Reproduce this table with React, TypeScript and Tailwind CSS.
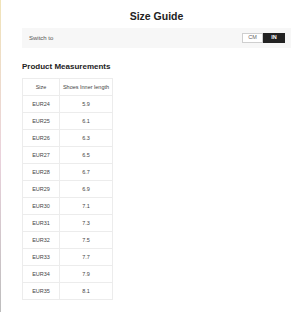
import React from "react";

const rows: [string, string][] = [
  ["EUR24", "5.9"],
  ["EUR25", "6.1"],
  ["EUR26", "6.3"],
  ["EUR27", "6.5"],
  ["EUR28", "6.7"],
  ["EUR29", "6.9"],
  ["EUR30", "7.1"],
  ["EUR31", "7.3"],
  ["EUR32", "7.5"],
  ["EUR33", "7.7"],
  ["EUR34", "7.9"],
  ["EUR35", "8.1"],
];

export default function App() {
  return (
    <div className="flex w-[300px] h-[312px] bg-white overflow-hidden font-['Liberation_Sans',Arial,sans-serif]">
      <div className="w-px shrink-0 bg-gradient-to-b from-[#f1e4b8] via-[#ead2dc] to-[#bdbdbd]" />
      <div className="flex-1 flex flex-col pl-[21px] pr-[9px]">
        <h1 className="mt-[9px] text-center text-[10.5px] leading-[14px] font-bold text-[#222]">
          Size Guide
        </h1>
        <div className="mt-[5px] h-[20px] flex items-center justify-between bg-[#f7f7f7] pl-[7px] pr-[6px]">
          <span className="text-[6px] text-[#555]">Switch to</span>
          <div className="flex h-[10px]">
            <button className="w-[21px] h-full border border-[#cfcfcf] bg-white text-[5.5px] leading-none text-[#666]">
              CM
            </button>
            <button className="w-[22px] h-full bg-[#222] text-[5.5px] leading-none font-bold text-white">
              IN
            </button>
          </div>
        </div>
        <h2 className="mt-[14px] text-[8px] leading-[10px] font-bold text-[#222]">
          Product Measurements
        </h2>
        <table className="mt-[6px] w-[91px] border-collapse text-[5.5px] text-[#444] table-fixed">
          <thead>
            <tr className="h-[17px]">
              <th className="w-[37px] border border-[#ececec] font-normal">Size</th>
              <th className="border border-[#ececec] font-normal whitespace-nowrap">
                Shoes Inner length
              </th>
            </tr>
          </thead>
          <tbody>
            {rows.map(([size, len]) => (
              <tr key={size} className="h-[17px]">
                <td className="border border-[#ececec] text-center">{size}</td>
                <td className="border border-[#ececec] text-center">{len}</td>
              </tr>
            ))}
          </tbody>
        </table>
      </div>
    </div>
  );
}
